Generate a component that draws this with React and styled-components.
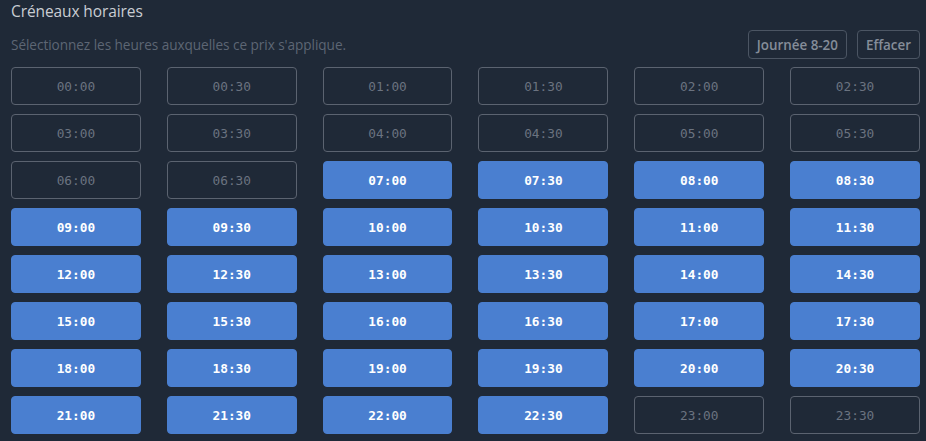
import React, { useState } from "react";
import styled, { createGlobalStyle } from "styled-components";

const Global = createGlobalStyle`
  html, body { margin: 0; padding: 0; background: #1f2937; }
  body { font-family: "Open Sans", "Noto Sans", sans-serif; }
`;

const Panel = styled.div`
  background: #1f2937;
  padding: 0 6px 0 11px;
  min-height: 441px;
  box-sizing: border-box;
`;

const Title = styled.h3`
  margin: 0;
  height: 30px;
  font-size: 15.5px;
  font-weight: 400;
  line-height: 22px;
  color: #c9cdd3;
  letter-spacing: -0.1px;
`;

const HeaderRow = styled.div`
  display: flex;
  align-items: center;
  justify-content: space-between;
  height: 29px;
  margin-bottom: 8px;
`;

const Hint = styled.p`
  margin: 0;
  font-size: 13.6px;
  color: #5d6674;
  letter-spacing: -0.05px;
`;

const Actions = styled.div`
  display: flex;
  gap: 10px;
`;

const GhostButton = styled.button`
  height: 29px;
  padding: 0 8px;
  background: transparent;
  border: 1px solid #4b5563;
  border-radius: 4px;
  color: #858d99;
  font-family: "Open Sans", "Noto Sans", sans-serif;
  font-size: 13.4px;
  font-weight: 600;
  cursor: pointer;
`;

const Grid = styled.div`
  display: grid;
  grid-template-columns: repeat(6, 1fr);
  column-gap: 26px;
  row-gap: 9px;
`;

const Slot = styled.button`
  height: 38px;
  box-sizing: border-box;
  border-radius: 4px;
  font-family: "DejaVu Sans Mono", "Liberation Mono", monospace;
  font-size: 12.8px;
  cursor: pointer;
  border: 1px solid ${(p) => (p.$on ? "#4a7fd0" : "#5b6370")};
  background: ${(p) => (p.$on ? "#4a7fd0" : "transparent")};
  color: ${(p) => (p.$on ? "#ffffff" : "#6b7380")};
  font-weight: ${(p) => (p.$on ? 700 : 400)};
`;

const slots = [];
for (let h = 0; h < 24; h++) {
  for (const m of ["00", "30"]) {
    slots.push(`${String(h).padStart(2, "0")}:${m}`);
  }
}

export default function App() {
  const [sel] = useState(() => new Set(slots.slice(14, 46)));
  return (
    <Panel>
      <Global />
      <Title>Créneaux horaires</Title>
      <HeaderRow>
        <Hint>Sélectionnez les heures auxquelles ce prix s'applique.</Hint>
        <Actions>
          <GhostButton>Journée 8-20</GhostButton>
          <GhostButton>Effacer</GhostButton>
        </Actions>
      </HeaderRow>
      <Grid>
        {slots.map((s) => (
          <Slot key={s} $on={sel.has(s)}>
            {s}
          </Slot>
        ))}
      </Grid>
    </Panel>
  );
}
